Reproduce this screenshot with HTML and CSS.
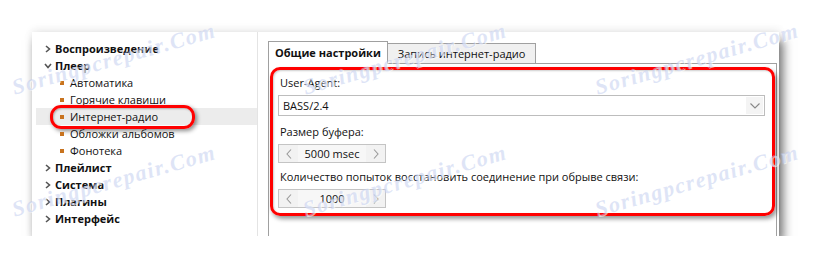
FILE: index.html
```html
<!DOCTYPE html>
<html lang="ru">
<head>
  <meta charset="UTF-8">
  <title>Настройки - Интернет-радио</title>
  <link rel="stylesheet" href="styles.css">
</head>
<body>

  <div class="window">
    <div class="tree">
      <div class="row group"><svg class="arr" viewBox="0 0 6 8"><path d="M1 1 L4.5 4 L1 7" /></svg>Воспроизведение</div>
      <div class="row group"><svg class="arr" viewBox="0 0 8 6"><path d="M1 1 L4 4.5 L7 1" /></svg>Плеер</div>
      <div class="row sub"><span class="dot"></span>Автоматика</div>
      <div class="row sub"><span class="dot"></span>Горячие клавиши</div>
      <div class="row sub selected"><span class="dot"></span>Интернет-радио<span class="mark"></span></div>
      <div class="row sub"><span class="dot"></span>Обложки альбомов</div>
      <div class="row sub"><span class="dot"></span>Фонотека</div>
      <div class="row group"><svg class="arr" viewBox="0 0 6 8"><path d="M1 1 L4.5 4 L1 7" /></svg>Плейлист</div>
      <div class="row group"><svg class="arr" viewBox="0 0 6 8"><path d="M1 1 L4.5 4 L1 7" /></svg>Система</div>
      <div class="row group"><svg class="arr" viewBox="0 0 6 8"><path d="M1 1 L4.5 4 L1 7" /></svg>Плагины</div>
      <div class="row group"><svg class="arr" viewBox="0 0 6 8"><path d="M1 1 L4.5 4 L1 7" /></svg>Интерфейс</div>
    </div>

    <div class="main">
      <div class="tabs">
        <div class="tab active">Общие настройки</div>
        <div class="tab">Запись интернет-радио</div>
      </div>
      <div class="panel">
        <div class="frame">
          <div class="label">User-Agent:</div>
          <div class="select">
            <span>BASS/2.4</span>
            <span class="drop"><svg viewBox="0 0 10 6"><path d="M0.5 0.5 L5 5 L9.5 0.5" /></svg></span>
          </div>
          <div class="label">Размер буфера:</div>
          <div class="spin">
            <span class="btn"><svg viewBox="0 0 6 10"><path d="M5 0.5 L1 5 L5 9.5" /></svg></span>
            <span class="val">5000 msec</span>
            <span class="btn"><svg viewBox="0 0 6 10"><path d="M1 0.5 L5 5 L1 9.5" /></svg></span>
          </div>
          <div class="label">Количество попыток восстановить соединение при обрыве связи:</div>
          <div class="spin">
            <span class="btn"><svg viewBox="0 0 6 10"><path d="M5 0.5 L1 5 L5 9.5" /></svg></span>
            <span class="val">1000</span>
            <span class="btn"><svg viewBox="0 0 6 10"><path d="M1 0.5 L5 5 L1 9.5" /></svg></span>
          </div>
        </div>
      </div>
    </div>

    <div class="wm" style="left: 82px; top: 27px;">Soringpcrepair.Com</div>
    <div class="wm" style="left: 373px; top: 27px;">Soringpcrepair.Com</div>
    <div class="wm" style="left: 665px; top: 27px;">Soringpcrepair.Com</div>
    <div class="wm" style="left: 82px; top: 149px;">Soringpcrepair.Com</div>
    <div class="wm" style="left: 373px; top: 149px;">Soringpcrepair.Com</div>
    <div class="wm" style="left: 665px; top: 149px;">Soringpcrepair.Com</div>
  </div>

</body>
</html>
```

FILE: styles.css
```css
body {
  margin: 0;
  padding: 32px 0 0 32px;
  background: white;
  font-family: 'Open Sans', 'Noto Sans', sans-serif;
  font-size: 11px;
  color: #111;
}
.window {
  position: relative;
  display: flex;
  width: 747px;
  height: 204px;
  background: white;
  box-shadow: 4px 8px 10px rgba(0, 0, 0, 0.55), 0 -2px 8px rgba(0, 0, 0, 0.08);
}
.tree {
  width: 221px;
  padding: 8px 0 0 4px;
  border-right: 1px solid #e4e4e4;
}
.row {
  position: relative;
  display: flex;
  align-items: center;
  height: 17px;
  white-space: nowrap;
}
.group {
  padding-left: 8px;
  font-weight: bold;
}
.arr {
  width: 8px;
  height: 8px;
  margin-right: 3px;
  fill: none;
  stroke: #555;
  stroke-width: 1.6;
}
.sub {
  padding-left: 24px;
}
.dot {
  width: 4px;
  height: 4px;
  margin-right: 6px;
  background: #c8731f;
}
.selected {
  background: #ececec;
}
.mark {
  position: absolute;
  left: 14px;
  top: -3px;
  width: 139px;
  height: 18px;
  border: 3px solid #f00;
  border-radius: 11px;
  box-shadow: 2px 2px 4px rgba(0, 0, 0, 0.45), inset 1px 1px 2px rgba(0, 0, 0, 0.25);
}
.main {
  flex: 1;
  display: flex;
  flex-direction: column;
  padding: 9px 2px 0 10px;
}
.tabs {
  display: flex;
  align-items: flex-end;
}
.tab {
  height: 19px;
  padding: 0 10px;
  line-height: 19px;
  background: #f0f0f0;
  border: 1px solid #a0a0a0;
  border-bottom: none;
  border-left: none;
}
.tab.active {
  height: 22px;
  line-height: 22px;
  padding: 0 6px;
  margin-bottom: -1px;
  position: relative;
  background: white;
  font-weight: bold;
  border-left: 1px solid #a0a0a0;
}
.panel {
  flex: 1;
  border: 1px solid #a0a0a0;
  border-bottom: none;
  padding: 3px 1px 0 1px;
}
.frame {
  height: 139px;
  padding: 4px 7px 0 5px;
  border: 3px solid #f00;
  border-radius: 10px;
  box-shadow: 2px 3px 4px rgba(0, 0, 0, 0.4), inset 1px 1px 2px rgba(0, 0, 0, 0.2);
}
.label {
  height: 17px;
  line-height: 17px;
  padding-left: 2px;
  margin-bottom: 4px;
}
.select {
  display: flex;
  align-items: center;
  justify-content: space-between;
  height: 19px;
  padding-left: 4px;
  margin-bottom: 7px;
  border: 1px solid #bdbdbd;
}
.drop {
  display: flex;
  align-items: center;
  justify-content: center;
  width: 17px;
  height: 17px;
  margin-right: 1px;
  background: #f4f4f4;
}
.drop svg {
  width: 10px;
  height: 6px;
  fill: none;
  stroke: #888;
  stroke-width: 1.1;
}
.spin {
  display: flex;
  align-items: center;
  width: 106px;
  height: 17px;
  margin-bottom: 5px;
  border: 1px solid #c4c4c4;
  background: #f2f2f2;
}
.btn {
  display: flex;
  align-items: center;
  justify-content: center;
  width: 19px;
  height: 17px;
}
.btn svg {
  width: 6px;
  height: 10px;
  fill: none;
  stroke: #999;
  stroke-width: 1.1;
}
.val {
  flex: 1;
  text-align: center;
  line-height: 17px;
  background: #f7f7f7;
}
.wm {
  position: absolute;
  transform: translate(-50%, -50%) rotate(-16deg);
  font-family: 'Liberation Serif', serif;
  font-style: italic;
  font-weight: bold;
  font-size: 22px;
  letter-spacing: 1.5px;
  color: rgba(190, 202, 238, 0.5);
  text-shadow: 1px 1px 0 rgba(255, 255, 255, 0.6);
  pointer-events: none;
  white-space: nowrap;
}
```
